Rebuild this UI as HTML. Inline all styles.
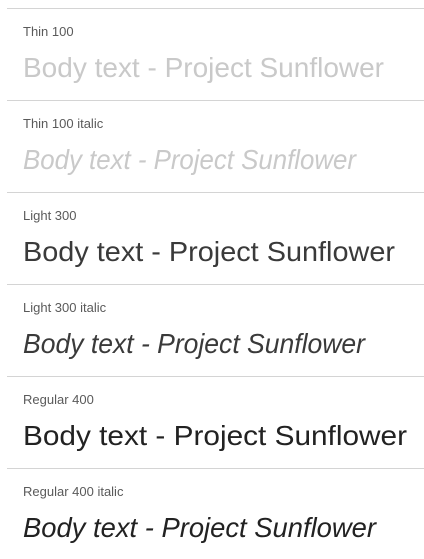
<!DOCTYPE html>
<html><head><style>
html,body{margin:0;padding:0;background:#fff;width:424px;height:559px;overflow:hidden}
svg{display:block}
.l{font-family:"Liberation Sans",sans-serif;font-size:13px;fill:#5a5a5a}
.b{font-family:"Liberation Sans",sans-serif;font-size:28px}
</style></head><body>
<svg width="424" height="559" viewBox="0 0 424 559">
<g stroke="#d4d4d4" stroke-width="1">
<line x1="7" y1="8.5" x2="424" y2="8.5"/>
<line x1="7" y1="100.5" x2="424" y2="100.5"/>
<line x1="7" y1="192.5" x2="424" y2="192.5"/>
<line x1="7" y1="284.5" x2="424" y2="284.5"/>
<line x1="7" y1="376.5" x2="424" y2="376.5"/>
<line x1="7" y1="468.5" x2="424" y2="468.5"/>
</g>
<text class="l" x="23" y="36">Thin 100</text>
<text class="b" x="23" y="77" fill="#c9c9c9" textLength="361" lengthAdjust="spacingAndGlyphs">Body text - Project Sunflower</text>
<text class="l" x="23" y="128">Thin 100 italic</text>
<text class="b" x="23" y="169" fill="#c9c9c9" font-style="italic" textLength="333" lengthAdjust="spacingAndGlyphs">Body text - Project Sunflower</text>
<text class="l" x="23" y="220">Light 300</text>
<text class="b" x="23" y="261" fill="#3a3a3a" textLength="372" lengthAdjust="spacingAndGlyphs">Body text - Project Sunflower</text>
<text class="l" x="23" y="312">Light 300 italic</text>
<text class="b" x="23" y="353" fill="#3a3a3a" font-style="italic" textLength="342" lengthAdjust="spacingAndGlyphs">Body text - Project Sunflower</text>
<text class="l" x="23" y="404">Regular 400</text>
<text class="b" x="23" y="445" fill="#222" textLength="384" lengthAdjust="spacingAndGlyphs">Body text - Project Sunflower</text>
<text class="l" x="23" y="496">Regular 400 italic</text>
<text class="b" x="23" y="537" fill="#222" font-style="italic" textLength="353" lengthAdjust="spacingAndGlyphs">Body text - Project Sunflower</text>
</svg>
</body></html>
